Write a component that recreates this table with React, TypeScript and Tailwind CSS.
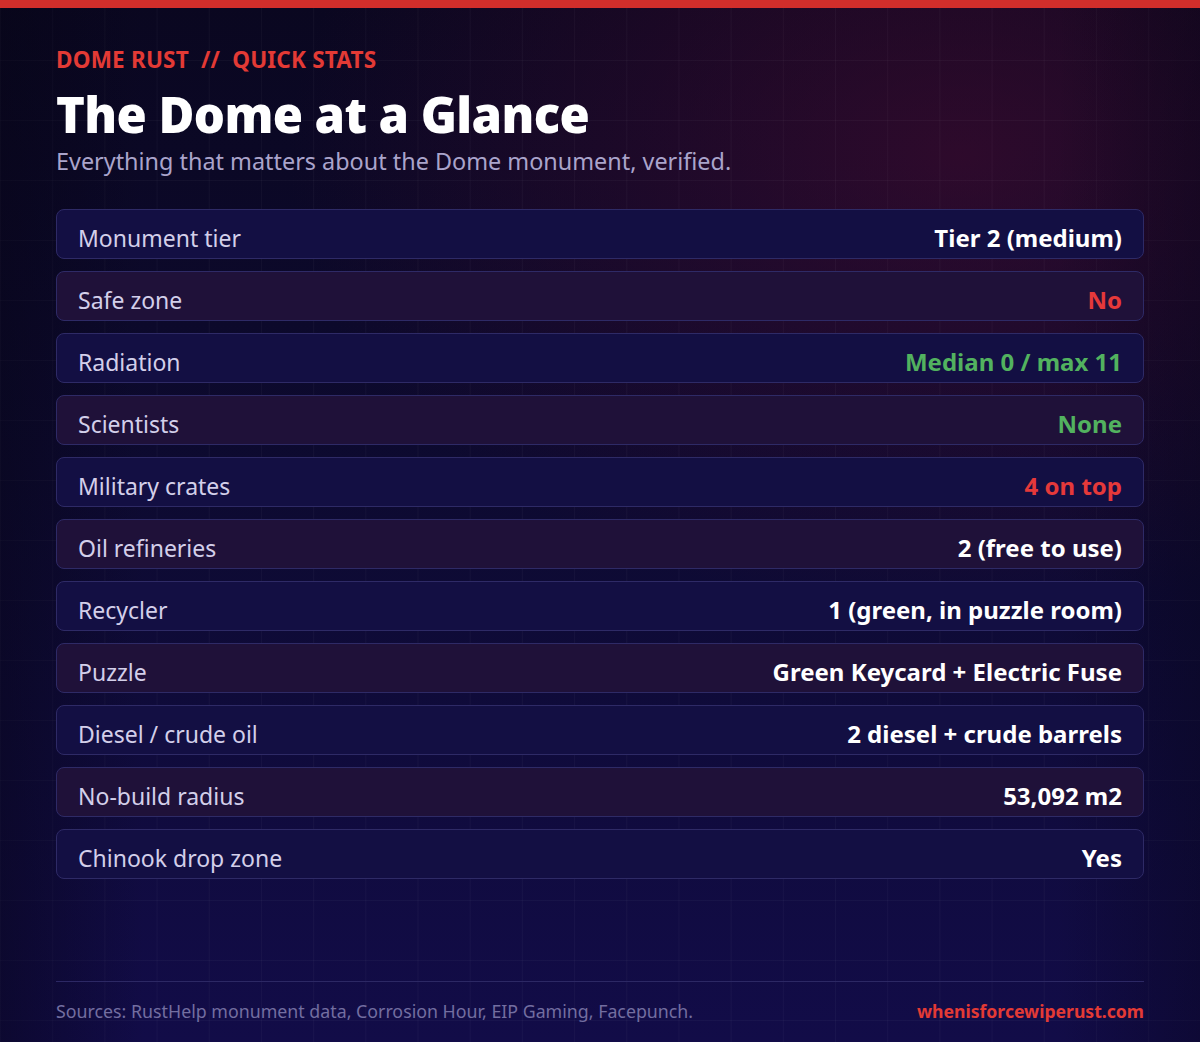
import React from "react";

interface Stat {
  label: string;
  value: string;
  tone?: "red" | "green";
}

const stats: Stat[] = [
  { label: "Monument tier", value: "Tier 2 (medium)" },
  { label: "Safe zone", value: "No", tone: "red" },
  { label: "Radiation", value: "Median 0 / max 11", tone: "green" },
  { label: "Scientists", value: "None", tone: "green" },
  { label: "Military crates", value: "4 on top", tone: "red" },
  { label: "Oil refineries", value: "2 (free to use)" },
  { label: "Recycler", value: "1 (green, in puzzle room)" },
  { label: "Puzzle", value: "Green Keycard + Electric Fuse" },
  { label: "Diesel / crude oil", value: "2 diesel + crude barrels" },
  { label: "No-build radius", value: "53,092 m2" },
  { label: "Chinook drop zone", value: "Yes" },
];

const App: React.FC = () => {
  return (
    <div className="relative h-[1042px] w-[1200px] overflow-hidden bg-[#0b0825] font-['Noto_Sans',sans-serif]">
      {/* background glow + grid */}
      <div className="absolute inset-0 bg-[radial-gradient(ellipse_70%_55%_at_80%_15%,rgba(80,12,50,0.5),transparent_80%),linear-gradient(to_bottom,#0a0720_0%,#0d0a30_45%,#120c48_100%)]" />
      <div className="absolute inset-0 bg-[linear-gradient(to_right,rgba(255,255,255,0.03)_1px,transparent_1px),linear-gradient(to_bottom,rgba(255,255,255,0.03)_1px,transparent_1px)] bg-[size:52.2px_60px]" />
      <div className="absolute inset-0 bg-[linear-gradient(to_right,rgba(6,4,20,0.45),transparent_12%,transparent_88%,rgba(6,4,20,0.35))]" />

      <div className="relative flex h-full flex-col">
        <div className="h-2 bg-[#d12e2b]" />

        <div className="flex flex-1 flex-col px-14">
          <p className="mt-[36px] text-[22.5px] font-bold leading-8 tracking-[0.2px] text-[#e33a35]">
            DOME RUST&nbsp; //&nbsp; QUICK STATS
          </p>
          <h1 className="mt-[8px] text-[49px] font-black leading-[60px] tracking-[-0.6px] text-white">
            The Dome at a Glance
          </h1>
          <p className="mt-px text-[23.4px] leading-8 text-[#aaa4cb]">
            Everything that matters about the Dome monument, verified.
          </p>

          <div className="mt-[32px] flex flex-col gap-3">
            {stats.map((s, i) => (
              <div
                key={s.label}
                className={
                  "flex h-[50px] items-center justify-between rounded-lg border-[1.5px] border-[#2e2a66] px-[21px] pt-2 " +
                  (i % 2 === 0 ? "bg-[#130f43]" : "bg-[#1f1139]")
                }
              >
                <span className="text-[23px] text-[#d3cfea]">{s.label}</span>
                <span
                  className={
                    "text-[24px] font-bold " +
                    (s.tone === "red"
                      ? "text-[#e5393a]"
                      : s.tone === "green"
                      ? "text-[#52b25f]"
                      : "text-white")
                  }
                >
                  {s.value}
                </span>
              </div>
            ))}
          </div>

          <div className="mt-auto flex items-center justify-between border-t border-[#2c2864] pt-[17px] pb-[19px]">
            <span className="text-[17.8px] leading-6 text-[#736ea0]">
              Sources: RustHelp monument data, Corrosion Hour, EIP Gaming, Facepunch.
            </span>
            <span className="text-[17.6px] font-bold leading-6 text-[#e33a35]">
              whenisforcewiperust.com
            </span>
          </div>
        </div>
      </div>
    </div>
  );
};

export default App;
